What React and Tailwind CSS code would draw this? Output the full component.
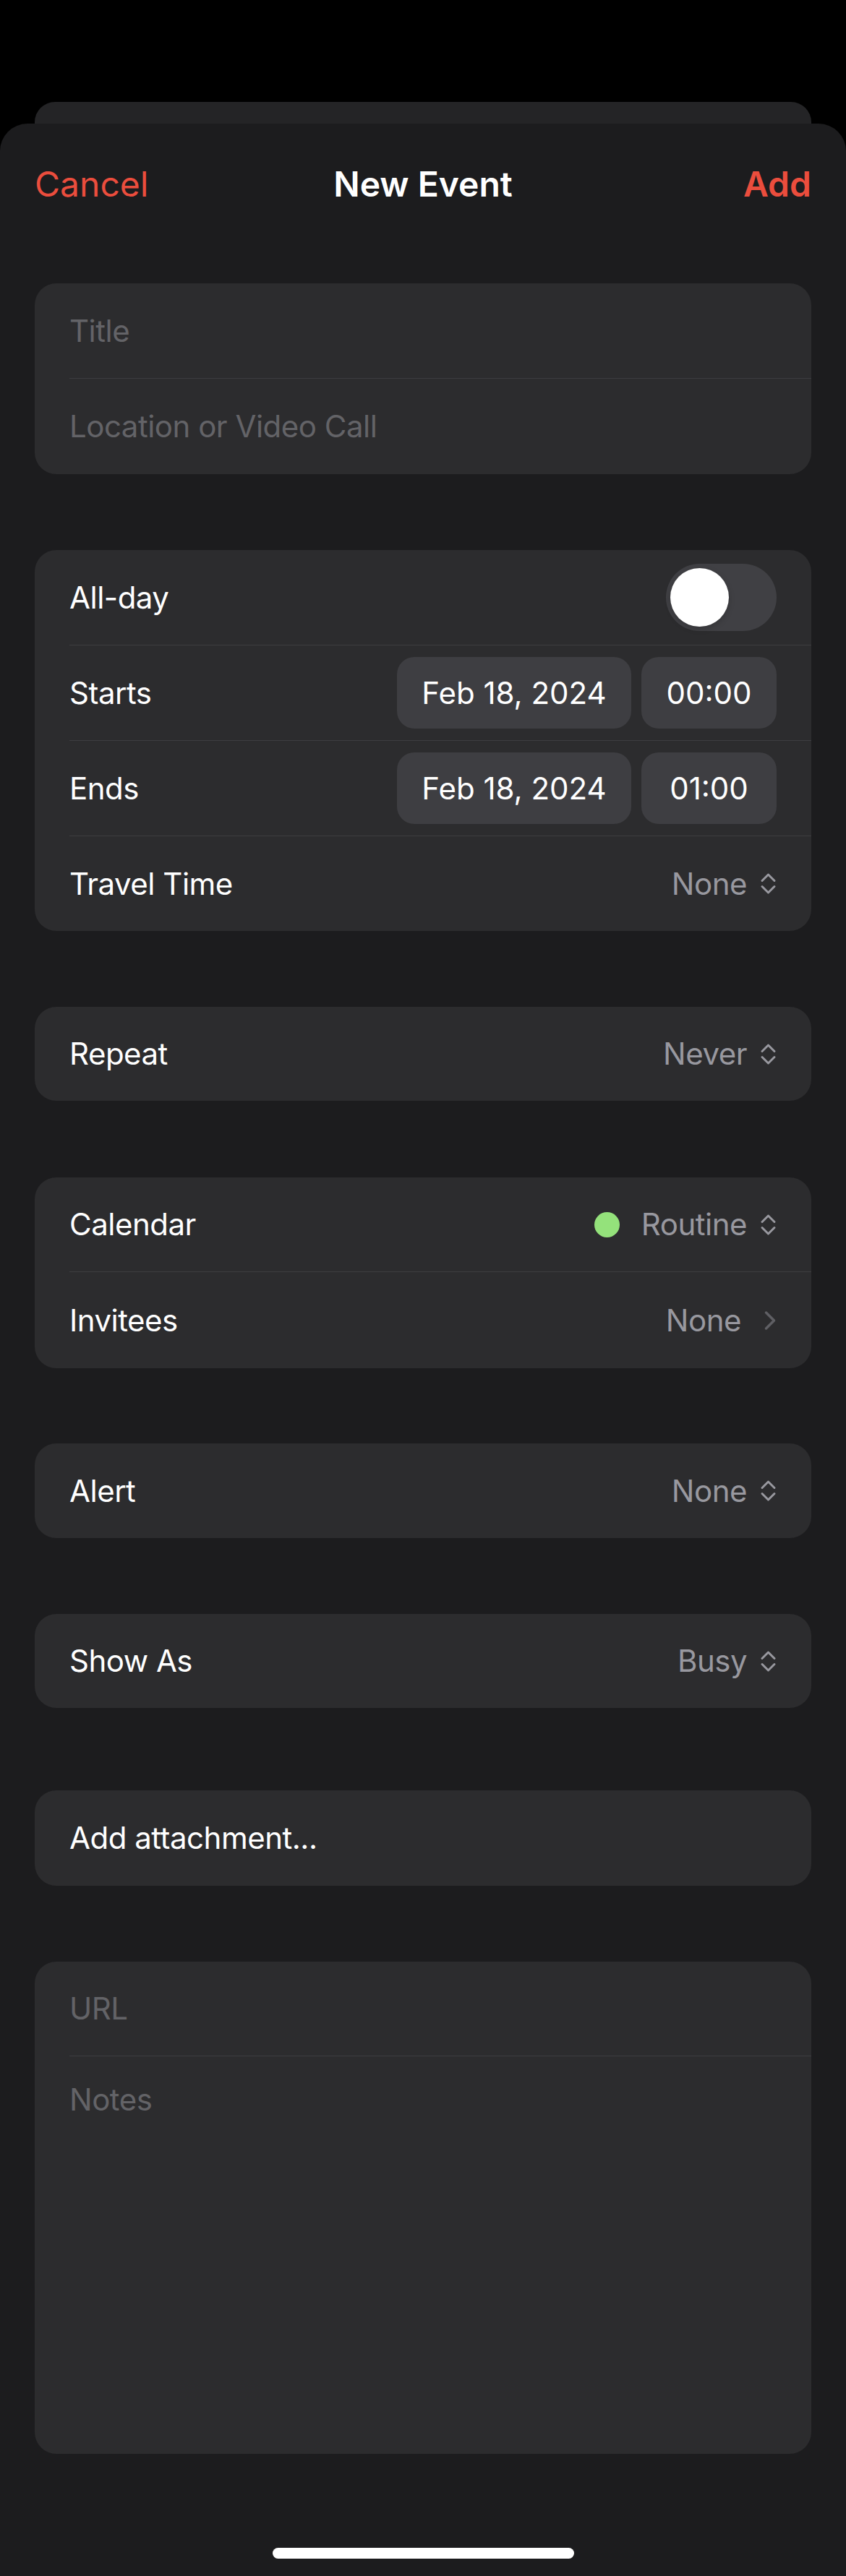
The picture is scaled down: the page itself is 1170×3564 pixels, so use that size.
import React from 'react'

function UpDown() {
  return (
    <svg width="23" height="31" viewBox="0 0 23 31" fill="none" className="shrink-0">
      <path d="M3 11.5 L11.5 3 L20 11.5" stroke="#98989f" strokeWidth="3" strokeLinecap="round" strokeLinejoin="round" />
      <path d="M3 19.5 L11.5 28 L20 19.5" stroke="#98989f" strokeWidth="3" strokeLinecap="round" strokeLinejoin="round" />
    </svg>
  )
}

function ChevronRight() {
  return (
    <svg width="18" height="28" viewBox="0 0 18 28" fill="none" className="shrink-0">
      <path d="M3.5 3 L14.5 14 L3.5 25" stroke="#5f5f64" strokeWidth="3.5" strokeLinecap="round" strokeLinejoin="round" />
    </svg>
  )
}

function Row({ label, h, sep, children, placeholder }) {
  return (
    <div className="pl-[48px]">
      <div
        className={`flex items-center justify-between pr-[48px] ${sep ? 'border-b border-[#3d3d40]' : ''}`}
        style={{ height: h }}
      >
        <span className={`text-[42px] leading-none tracking-[-0.5px] ${placeholder ? 'text-[#636367]' : 'text-white'}`}>
          {label}
        </span>
        {children}
      </div>
    </div>
  )
}

function Picker({ value }) {
  return (
    <div className="flex items-center gap-[18px]">
      <span className="text-[42px] leading-none tracking-[-0.5px] text-[#98989f]">{value}</span>
      <UpDown />
    </div>
  )
}

function Pill({ children, w }) {
  return (
    <div
      className="h-[99px] rounded-[24px] bg-[#3e3e42] flex items-center justify-center text-[42px] leading-none text-white"
      style={{ width: w }}
    >
      {children}
    </div>
  )
}

function Card({ children, className = '' }) {
  return <div className={`mx-[48px] rounded-[30px] bg-[#2c2c2e] overflow-hidden ${className}`}>{children}</div>
}

export default function App() {
  return (
    <div className="w-[1170px] h-[3564px] bg-black font-['Inter',sans-serif] flex flex-col overflow-hidden">
      {/* card behind the sheet */}
      <div className="mt-[141px] mx-[48px] h-[30px] rounded-t-[28px] bg-[#242426] shrink-0" />

      {/* sheet */}
      <div className="flex-1 bg-[#1c1c1e] rounded-t-[38px] flex flex-col">
        <div className="h-[168px] px-[48px] flex items-center shrink-0">
          <div className="flex-1 text-[48px] leading-none text-[#eb4d3d]">Cancel</div>
          <div className="text-[48px] leading-none font-semibold text-white">New Event</div>
          <div className="flex-1 text-right text-[48px] leading-none font-semibold text-[#eb4d3d]">Add</div>
        </div>

        <Card className="mt-[53px]">
          <Row label="Title" h={132} sep placeholder />
          <Row label="Location or Video Call" h={132} placeholder />
        </Card>

        <Card className="mt-[105px]">
          <Row label="All-day" h={132} sep>
            <div className="w-[153px] h-[93px] rounded-full bg-[#404044] p-[6px] flex items-center">
              <div className="w-[81px] h-[81px] rounded-full bg-white shadow-[0_3px_8px_rgba(0,0,0,0.2)]" />
            </div>
          </Row>
          <Row label="Starts" h={132} sep>
            <div className="flex gap-[14px]">
              <Pill w={324}>Feb 18, 2024</Pill>
              <Pill w={187}>00:00</Pill>
            </div>
          </Row>
          <Row label="Ends" h={132} sep>
            <div className="flex gap-[14px]">
              <Pill w={324}>Feb 18, 2024</Pill>
              <Pill w={187}>01:00</Pill>
            </div>
          </Row>
          <Row label="Travel Time" h={131}>
            <Picker value="None" />
          </Row>
        </Card>

        <Card className="mt-[105px]">
          <Row label="Repeat" h={130}>
            <Picker value="Never" />
          </Row>
        </Card>

        <Card className="mt-[106px]">
          <Row label="Calendar" h={131} sep>
            <div className="flex items-center">
              <div className="w-[35px] h-[35px] rounded-full bg-[#94e27b] mr-[30px]" />
              <Picker value="Routine" />
            </div>
          </Row>
          <Row label="Invitees" h={133}>
            <div className="flex items-center gap-[31px]">
              <span className="text-[42px] leading-none tracking-[-0.5px] text-[#98989f]">None</span>
              <ChevronRight />
            </div>
          </Row>
        </Card>

        <Card className="mt-[104px]">
          <Row label="Alert" h={131}>
            <Picker value="None" />
          </Row>
        </Card>

        <Card className="mt-[105px]">
          <Row label="Show As" h={130}>
            <Picker value="Busy" />
          </Row>
        </Card>

        <Card className="mt-[114px]">
          <Row label="Add attachment..." h={132} />
        </Card>

        <Card className="mt-[105px] h-[681px]">
          <Row label="URL" h={131} sep placeholder />
          <div className="pl-[48px] pt-[35px] text-[42px] leading-[50px] tracking-[-0.5px] text-[#636367]">Notes</div>
        </Card>

        <div className="mt-[130px] mx-auto w-[417px] h-[15px] rounded-full bg-white shrink-0" />
      </div>
    </div>
  )
}
